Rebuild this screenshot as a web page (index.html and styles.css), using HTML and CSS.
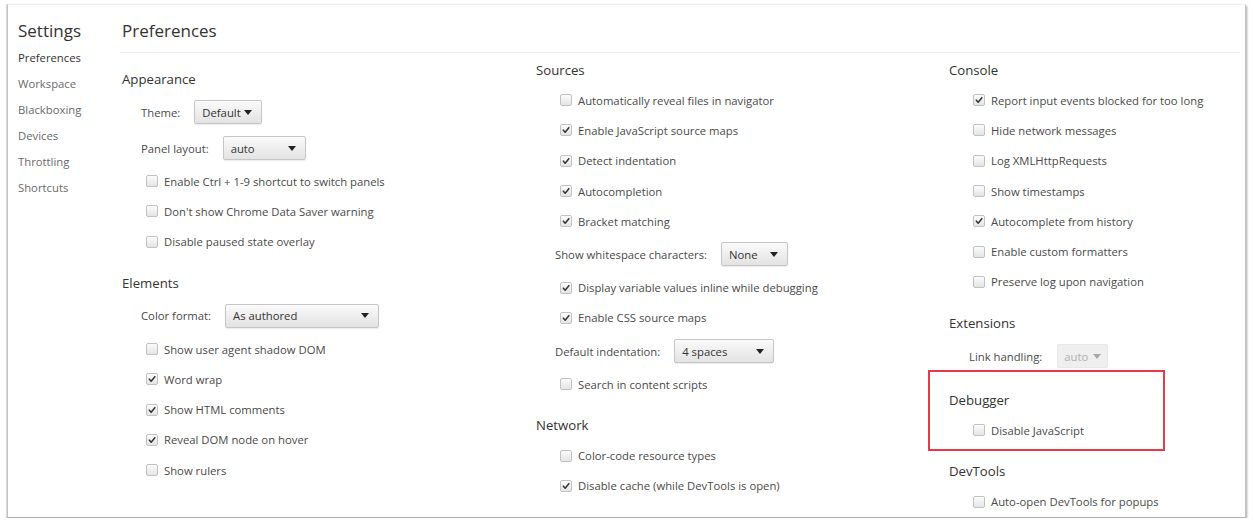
FILE: index.html
```html
<!DOCTYPE html>
<html>
<head>
<meta charset="utf-8">
<link rel="stylesheet" href="styles.css">
</head>
<body>
<div class="window">
  <aside class="sidebar">
    <div class="sidebar-title">Settings</div>
    <nav class="nav">
      <div class="nav-item active">Preferences</div>
      <div class="nav-item">Workspace</div>
      <div class="nav-item">Blackboxing</div>
      <div class="nav-item">Devices</div>
      <div class="nav-item">Throttling</div>
      <div class="nav-item">Shortcuts</div>
    </nav>
  </aside>
  <main class="main">
    <div class="page-title">Preferences</div>
    <div class="columns">
      <div class="col col-first">
        <section class="section">
          <div class="section-title">Appearance</div>
          <div class="field"><span class="field-label">Theme:</span><span class="select w-theme"><span>Default</span><i class="arrow"></i></span></div>
          <div class="field"><span class="field-label">Panel layout:</span><span class="select w-panel"><span>auto</span><i class="arrow"></i></span></div>
          <label class="opt"><span class="cb"></span>Enable Ctrl + 1-9 shortcut to switch panels</label>
          <label class="opt"><span class="cb"></span>Don't show Chrome Data Saver warning</label>
          <label class="opt"><span class="cb"></span>Disable paused state overlay</label>
        </section>
        <section class="section">
          <div class="section-title">Elements</div>
          <div class="field"><span class="field-label">Color format:</span><span class="select w-color"><span>As authored</span><i class="arrow"></i></span></div>
          <label class="opt"><span class="cb"></span>Show user agent shadow DOM</label>
          <label class="opt"><span class="cb checked"><svg viewBox="0 0 12 12"><path d="M2.8 6.2 L5 8.6 L9.4 3.2"/></svg></span>Word wrap</label>
          <label class="opt"><span class="cb checked"><svg viewBox="0 0 12 12"><path d="M2.8 6.2 L5 8.6 L9.4 3.2"/></svg></span>Show HTML comments</label>
          <label class="opt"><span class="cb checked"><svg viewBox="0 0 12 12"><path d="M2.8 6.2 L5 8.6 L9.4 3.2"/></svg></span>Reveal DOM node on hover</label>
          <label class="opt"><span class="cb"></span>Show rulers</label>
        </section>
      </div>
      <div class="col">
        <section class="section">
          <div class="section-title">Sources</div>
          <label class="opt"><span class="cb"></span>Automatically reveal files in navigator</label>
          <label class="opt"><span class="cb checked"><svg viewBox="0 0 12 12"><path d="M2.8 6.2 L5 8.6 L9.4 3.2"/></svg></span>Enable JavaScript source maps</label>
          <label class="opt"><span class="cb checked"><svg viewBox="0 0 12 12"><path d="M2.8 6.2 L5 8.6 L9.4 3.2"/></svg></span>Detect indentation</label>
          <label class="opt"><span class="cb checked"><svg viewBox="0 0 12 12"><path d="M2.8 6.2 L5 8.6 L9.4 3.2"/></svg></span>Autocompletion</label>
          <label class="opt"><span class="cb checked"><svg viewBox="0 0 12 12"><path d="M2.8 6.2 L5 8.6 L9.4 3.2"/></svg></span>Bracket matching</label>
          <div class="field"><span class="field-label">Show whitespace characters:</span><span class="select w-none"><span>None</span><i class="arrow"></i></span></div>
          <label class="opt"><span class="cb checked"><svg viewBox="0 0 12 12"><path d="M2.8 6.2 L5 8.6 L9.4 3.2"/></svg></span>Display variable values inline while debugging</label>
          <label class="opt"><span class="cb checked"><svg viewBox="0 0 12 12"><path d="M2.8 6.2 L5 8.6 L9.4 3.2"/></svg></span>Enable CSS source maps</label>
          <div class="field"><span class="field-label">Default indentation:</span><span class="select w-indent"><span>4 spaces</span><i class="arrow"></i></span></div>
          <label class="opt"><span class="cb"></span>Search in content scripts</label>
        </section>
        <section class="section">
          <div class="section-title">Network</div>
          <label class="opt"><span class="cb"></span>Color-code resource types</label>
          <label class="opt"><span class="cb checked"><svg viewBox="0 0 12 12"><path d="M2.8 6.2 L5 8.6 L9.4 3.2"/></svg></span>Disable cache (while DevTools is open)</label>
        </section>
      </div>
      <div class="col">
        <section class="section">
          <div class="section-title">Console</div>
          <label class="opt"><span class="cb checked"><svg viewBox="0 0 12 12"><path d="M2.8 6.2 L5 8.6 L9.4 3.2"/></svg></span>Report input events blocked for too long</label>
          <label class="opt"><span class="cb"></span>Hide network messages</label>
          <label class="opt"><span class="cb"></span>Log XMLHttpRequests</label>
          <label class="opt"><span class="cb"></span>Show timestamps</label>
          <label class="opt"><span class="cb checked"><svg viewBox="0 0 12 12"><path d="M2.8 6.2 L5 8.6 L9.4 3.2"/></svg></span>Autocomplete from history</label>
          <label class="opt"><span class="cb"></span>Enable custom formatters</label>
          <label class="opt"><span class="cb"></span>Preserve log upon navigation</label>
        </section>
        <section class="section">
          <div class="section-title">Extensions</div>
          <div class="field field-wide"><span class="field-label">Link handling:</span><span class="select disabled w-auto"><span>auto</span><i class="arrow"></i></span></div>
        </section>
        <section class="section">
          <div class="section-title">Debugger</div>
          <label class="opt"><span class="cb"></span>Disable JavaScript</label>
          <div class="highlight-box"></div>
        </section>
        <section class="section">
          <div class="section-title">DevTools</div>
          <label class="opt"><span class="cb"></span>Auto-open DevTools for popups</label>
        </section>
      </div>
    </div>
  </main>
</div>
</body>
</html>
```
FILE: styles.css
```css
* { box-sizing: border-box; }

html, body {
  margin: 0;
  background: #ffffff;
}

body {
  padding: 4px 0 0 7px;
  font-family: "Open Sans", "Noto Sans", sans-serif;
  font-size: 11.3px;
  color: #4a4a4a;
}

.window {
  width: 1239px;
  height: 514px;
  background: #fff;
  border: 1px solid #c4c4c4;
  border-top-color: #efefef;
  border-bottom-color: #b0b0b0;
  box-shadow: 1px 2px 2px rgba(0, 0, 0, 0.35), -1px 0 1px rgba(0, 0, 0, 0.12);
  display: flex;
  overflow: hidden;
}

.sidebar {
  width: 112px;
  flex: none;
  padding-left: 10px;
}

.sidebar-title {
  padding-top: 12px;
  height: 40px;
  line-height: 28px;
  font-size: 17px;
  color: #333;
}

.nav-item {
  height: 26px;
  line-height: 26px;
  color: #6a6a6a;
}

.nav-item.active {
  color: #333;
}

.main {
  flex: 1;
  min-width: 0;
  margin-right: 5px;
}

.page-title {
  padding: 12px 0 0 2px;
  height: 48px;
  line-height: 28px;
  font-size: 17px;
  color: #333;
  border-bottom: 1px solid #ececec;
}

.columns {
  display: grid;
  grid-template-columns: 414px 413px 1fr;
  padding: 2px 0 0 2px;
}

.col-first {
  padding-top: 9px;
}

.section {
  position: relative;
}

.section + .section {
  margin-top: 11px;
}

.section-title {
  height: 30px;
  line-height: 30px;
  font-size: 13.2px;
  color: #333;
}

.opt {
  display: flex;
  align-items: center;
  height: 30.3px;
  padding-left: 24px;
  white-space: nowrap;
}

.cb {
  width: 12px;
  height: 12px;
  flex: none;
  margin-right: 6px;
  border: 1px solid #c2c2c2;
  border-radius: 2px;
  background: linear-gradient(#fcfcfc, #e4e4e4);
  display: flex;
  align-items: center;
  justify-content: center;
}

.cb svg {
  width: 10px;
  height: 10px;
}

.cb svg path {
  fill: none;
  stroke: #333;
  stroke-width: 1.8;
  stroke-linecap: round;
  stroke-linejoin: round;
}

.field {
  display: flex;
  align-items: center;
  height: 36px;
  padding-left: 19px;
  white-space: nowrap;
}

.field-wide {
  padding-left: 20px;
}

.select {
  margin-left: 14px;
  height: 24px;
  border: 1px solid #c6c6c6;
  border-radius: 2px;
  background: linear-gradient(#fafafa, #e3e3e3);
  box-shadow: 0 1px 1px rgba(0, 0, 0, 0.08);
  display: flex;
  align-items: center;
  justify-content: space-between;
  padding: 0 9px 0 7px;
  color: #333;
}

.arrow {
  width: 0;
  height: 0;
  border-left: 4px solid transparent;
  border-right: 4px solid transparent;
  border-top: 5px solid #222;
}

.w-theme { width: 68px; }
.w-panel { width: 83px; }
.w-color { width: 154px; }
.w-none { width: 67px; }
.w-indent { width: 100px; }
.w-auto { width: 51px; }

.select.disabled {
  margin-left: 15px;
  padding: 0 6px 0 6px;
  background: #efefef;
  border-color: #e8e8e8;
  box-shadow: none;
  color: #b0b0b0;
}

.select.disabled .arrow {
  border-top-color: #a8a8a8;
}

.highlight-box {
  position: absolute;
  left: -21px;
  top: -15px;
  width: 237px;
  height: 81px;
  border: 2px solid #e8394b;
  pointer-events: none;
}
```
